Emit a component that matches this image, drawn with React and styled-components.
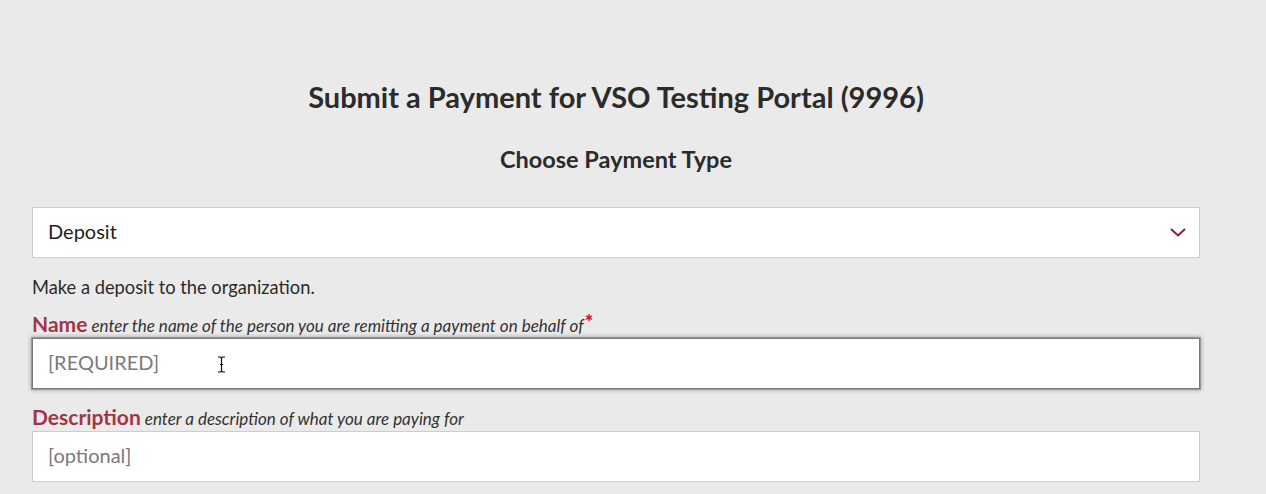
import styled, { createGlobalStyle } from 'styled-components'

const GlobalStyle = createGlobalStyle`
	body {
		margin: 0;
		background: #eaeaea;
		font-family: 'Lato', 'Noto Sans', sans-serif;
		color: #222;
	}
`

const Page = styled.main`
	width: 1168px;
	margin-left: 32px;
	padding-top: 80px;
`

const Title = styled.h1`
	margin: 0;
	text-align: center;
	font-size: 29px;
	line-height: 34px;
	font-weight: 700;
	color: #2b2b2b;
`

const SubTitle = styled.h2`
	margin: 31px 0 34px;
	text-align: center;
	font-size: 23.5px;
	line-height: 28px;
	font-weight: 700;
	color: #2b2b2b;
`

const SelectBox = styled.div`
	box-sizing: border-box;
	height: 51px;
	background: #fff;
	border: 1px solid #cdcdcd;
	display: flex;
	align-items: center;
	justify-content: space-between;
	padding: 0 12px 3px 15px;
	font-size: 20px;
	color: #1f1f1f;
	svg {
		margin-top: 2px;
	}
`

const Hint = styled.p`
	margin: 17px 0 13px;
	font-size: 18.3px;
	line-height: 24px;
	color: #2a2a2a;
`

const Field = styled.div`
	margin-bottom: ${({ $gap }) => $gap}px;
`

const Label = styled.div`
	font-size: 17px;
	line-height: 24px;
	color: #333;
	strong {
		font-size: 21px;
		font-weight: 700;
		color: #a33446;
		margin-right: 4px;
	}
	em {
		font-style: italic;
	}
	sup {
		color: #c8102e;
		font-size: 20px;
		font-weight: 900;
		vertical-align: 2px;
		line-height: 0;
		margin-left: 1px;
	}
`

const Input = styled.div`
	position: relative;
	box-sizing: border-box;
	height: 51px;
	background: #fff;
	border: 1px solid ${({ $focused }) => ($focused ? '#7a7a7a' : '#cdcdcd')};
	box-shadow: ${({ $focused }) => ($focused ? '0 0 0 1px #9a9a9a, 0 0 4px 1px rgba(0,0,0,0.35)' : 'none')};
	display: flex;
	align-items: center;
	padding: 0 0 3px 15px;
	font-size: 20px;
	color: #7a7a7a;
`

const Cursor = styled.svg`
	position: absolute;
	left: 184px;
	top: 17px;
`

const Chevron = () => (
	<svg width='18' height='10' viewBox='0 0 18 10'>
		<path d='M2 2l7 6.5 7-6.5' fill='none' stroke='#8b1c2c' strokeWidth='2' />
	</svg>
)

export default function App() {
	return (
		<>
			<GlobalStyle />
			<Page>
				<Title>Submit a Payment for VSO Testing Portal (9996)</Title>
				<SubTitle>Choose Payment Type</SubTitle>
				<SelectBox>
					<span>Deposit</span>
					<Chevron />
				</SelectBox>
				<Hint>Make a deposit to the organization.</Hint>
				<Field $gap={16}>
					<Label>
						<strong>Name</strong>
						<em>enter the name of the person you are remitting a payment on behalf of</em>
						<sup>*</sup>
					</Label>
					<Input $focused>
						[REQUIRED]
						<Cursor width='9' height='17' viewBox='0 0 9 17'>
							<path d='M1 1h2.5L4.5 2 5.5 1H8M4.5 2v13M1 16h2.5l1-1 1 1H8M3 8.5h3' fill='none' stroke='#111' strokeWidth='1.2' />
						</Cursor>
					</Input>
				</Field>
				<Field $gap={0}>
					<Label>
						<strong>Description</strong>
						<em>enter a description of what you are paying for</em>
					</Label>
					<Input>[optional]</Input>
				</Field>
			</Page>
		</>
	)
}
